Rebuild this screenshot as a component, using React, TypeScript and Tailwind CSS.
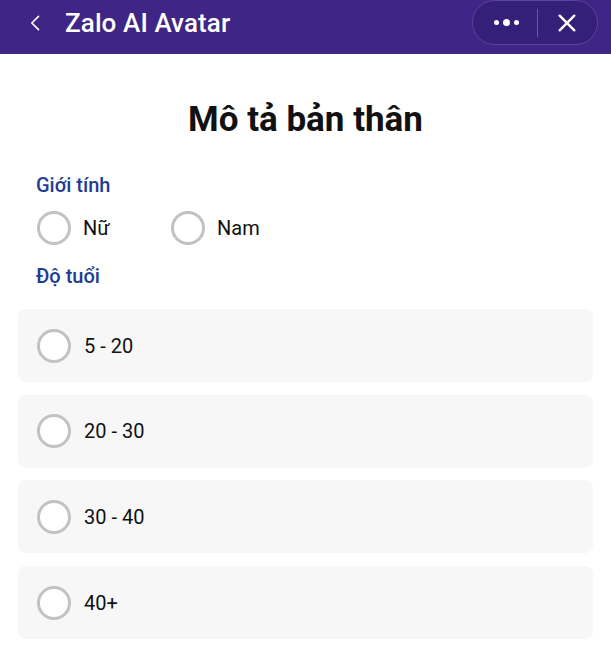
import { useState } from "react";

function Radio({ checked }: { checked?: boolean }) {
  return (
    <span
      className={`flex h-[34px] w-[34px] shrink-0 items-center justify-center rounded-full border-[3px] bg-white ${
        checked ? "border-[#1e3a8a]" : "border-[#c2c2c2]"
      }`}
    >
      {checked ? <span className="h-[16px] w-[16px] rounded-full bg-[#1e3a8a]" /> : null}
    </span>
  );
}

const ages = ["5 - 20", "20 - 30", "30 - 40", "40+"];

export default function App() {
  const [gender, setGender] = useState<string | null>(null);
  const [age, setAge] = useState<string | null>(null);

  return (
    <div className="min-h-[650px] bg-white font-['Roboto',sans-serif] text-[#111]">
      <header className="flex h-[54px] items-center bg-[#3f2586] pb-[9px] pl-[26px] pr-[13px] text-white">
        <button type="button" className="flex h-[30px] w-[20px] items-center justify-center" aria-label="Back">
          <svg viewBox="0 0 24 24" className="h-[22px] w-[22px]" fill="none" stroke="currentColor" strokeWidth={2} strokeLinecap="round" strokeLinejoin="round">
            <path d="M15 4l-8 8 8 8" />
          </svg>
        </button>
        <h1 className="ml-[19px] text-[26px] font-medium leading-none tracking-[0.1px]">Zalo AI Avatar</h1>
        <div className="ml-auto flex h-[45px] w-[126px] items-center rounded-full border border-[#5a449b] bg-[#361f78]">
          <button type="button" className="flex flex-1 items-center justify-center gap-[4px] pl-[4px]" aria-label="More">
            <span className="h-[5px] w-[5px] rounded-full bg-white" />
            <span className="h-[7px] w-[7px] rounded-full bg-white" />
            <span className="h-[5px] w-[5px] rounded-full bg-white" />
          </button>
          <span className="h-[28px] w-px bg-[#6a57a8]" />
          <button type="button" className="flex flex-1 items-center justify-center" aria-label="Close">
            <svg viewBox="0 0 24 24" className="h-[22px] w-[22px]" fill="none" stroke="currentColor" strokeWidth={2.6} strokeLinecap="round">
              <path d="M4 4l16 16M20 4L4 20" />
            </svg>
          </button>
        </div>
      </header>

      <main className="px-[18px]">
        <h2 className="pt-[46px] text-center text-[35px] font-bold leading-[40px] text-[#111]">Mô tả bản thân</h2>

        <p className="mt-[33px] pl-[18px] text-[20px] font-medium leading-[24px] text-[#1f3c94]">Giới tính</p>
        <div className="mt-[14px] flex items-center pl-[19px]">
          {["Nữ", "Nam"].map((g) => (
            <button
              key={g}
              type="button"
              className="flex w-[134px] items-center gap-[12px] text-left text-[20px] leading-[34px]"
              onClick={() => setGender(g)}
            >
              <Radio checked={gender === g} />
              <span>{g}</span>
            </button>
          ))}
        </div>

        <p className="mt-[19px] pl-[18px] text-[20px] font-medium leading-[24px] text-[#1f3c94]">Độ tuổi</p>

        <div className="mt-[21px] flex flex-col gap-[12.7px]">
          {ages.map((a) => (
            <button
              key={a}
              type="button"
              className="flex h-[73px] items-center gap-[13px] rounded-[8px] bg-[#f7f7f7] pl-[19px] text-left text-[20px]"
              onClick={() => setAge(a)}
            >
              <Radio checked={age === a} />
              <span>{a}</span>
            </button>
          ))}
        </div>
      </main>
    </div>
  );
}
